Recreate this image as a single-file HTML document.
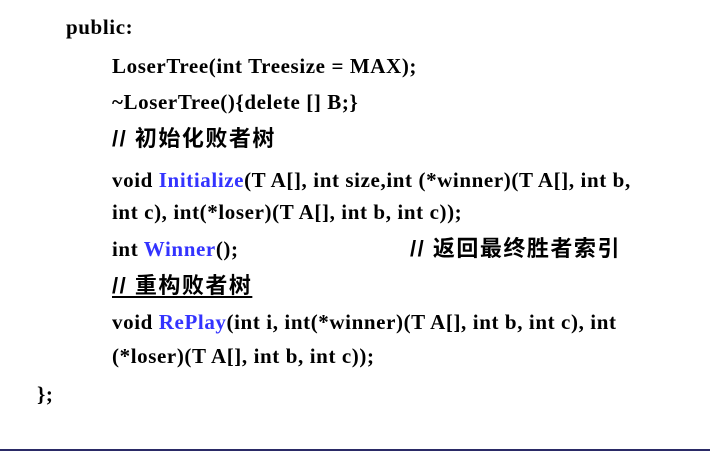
<!DOCTYPE html>
<html><head><meta charset="utf-8"><style>
html,body{margin:0;padding:0;background:#fff;}
body{width:710px;height:452px;position:relative;overflow:hidden;font-family:"Liberation Serif",serif;font-size:21px;font-weight:bold;color:#000;letter-spacing:0.6px;}
.l{position:absolute;white-space:nowrap;line-height:26px;}
.b{color:#3333ff;}
.c{font-family:"Liberation Sans","Noto Sans CJK SC",sans-serif;font-weight:bold;font-size:22px;letter-spacing:1.5px;}
.u{text-decoration:underline;text-underline-offset:3px;}
.bar{position:absolute;left:0;top:449px;width:710px;height:2px;background:#2a2a66;}
</style></head><body>
<div class="l" style="left:66px;top:14px">public:</div>
<div class="l" style="left:112px;top:53px">LoserTree(int Treesize = MAX);</div>
<div class="l" style="left:112px;top:89px">~LoserTree(){delete [] B;}</div>
<div class="l c" style="left:112px;top:126px">// 初始化败者树</div>
<div class="l" style="left:112px;top:167px">void <span class="b">Initialize</span>(T A[], int size,int (*winner)(T A[], int b,</div>
<div class="l" style="left:112px;top:199px">int c), int(*loser)(T A[], int b, int c));</div>
<div class="l" style="left:112px;top:236px">int <span class="b">Winner</span>();</div>
<div class="l c" style="left:410px;top:236px">// 返回最终胜者索引</div>
<div class="l c u" style="left:112px;top:273px">// 重构败者树</div>
<div class="l" style="left:112px;top:309px">void <span class="b">RePlay</span>(int i, int(*winner)(T A[], int b, int c), int</div>
<div class="l" style="left:112px;top:343px">(*loser)(T A[], int b, int c));</div>
<div class="l" style="left:37px;top:381px">};</div>
<div class="bar"></div>
</body></html>
